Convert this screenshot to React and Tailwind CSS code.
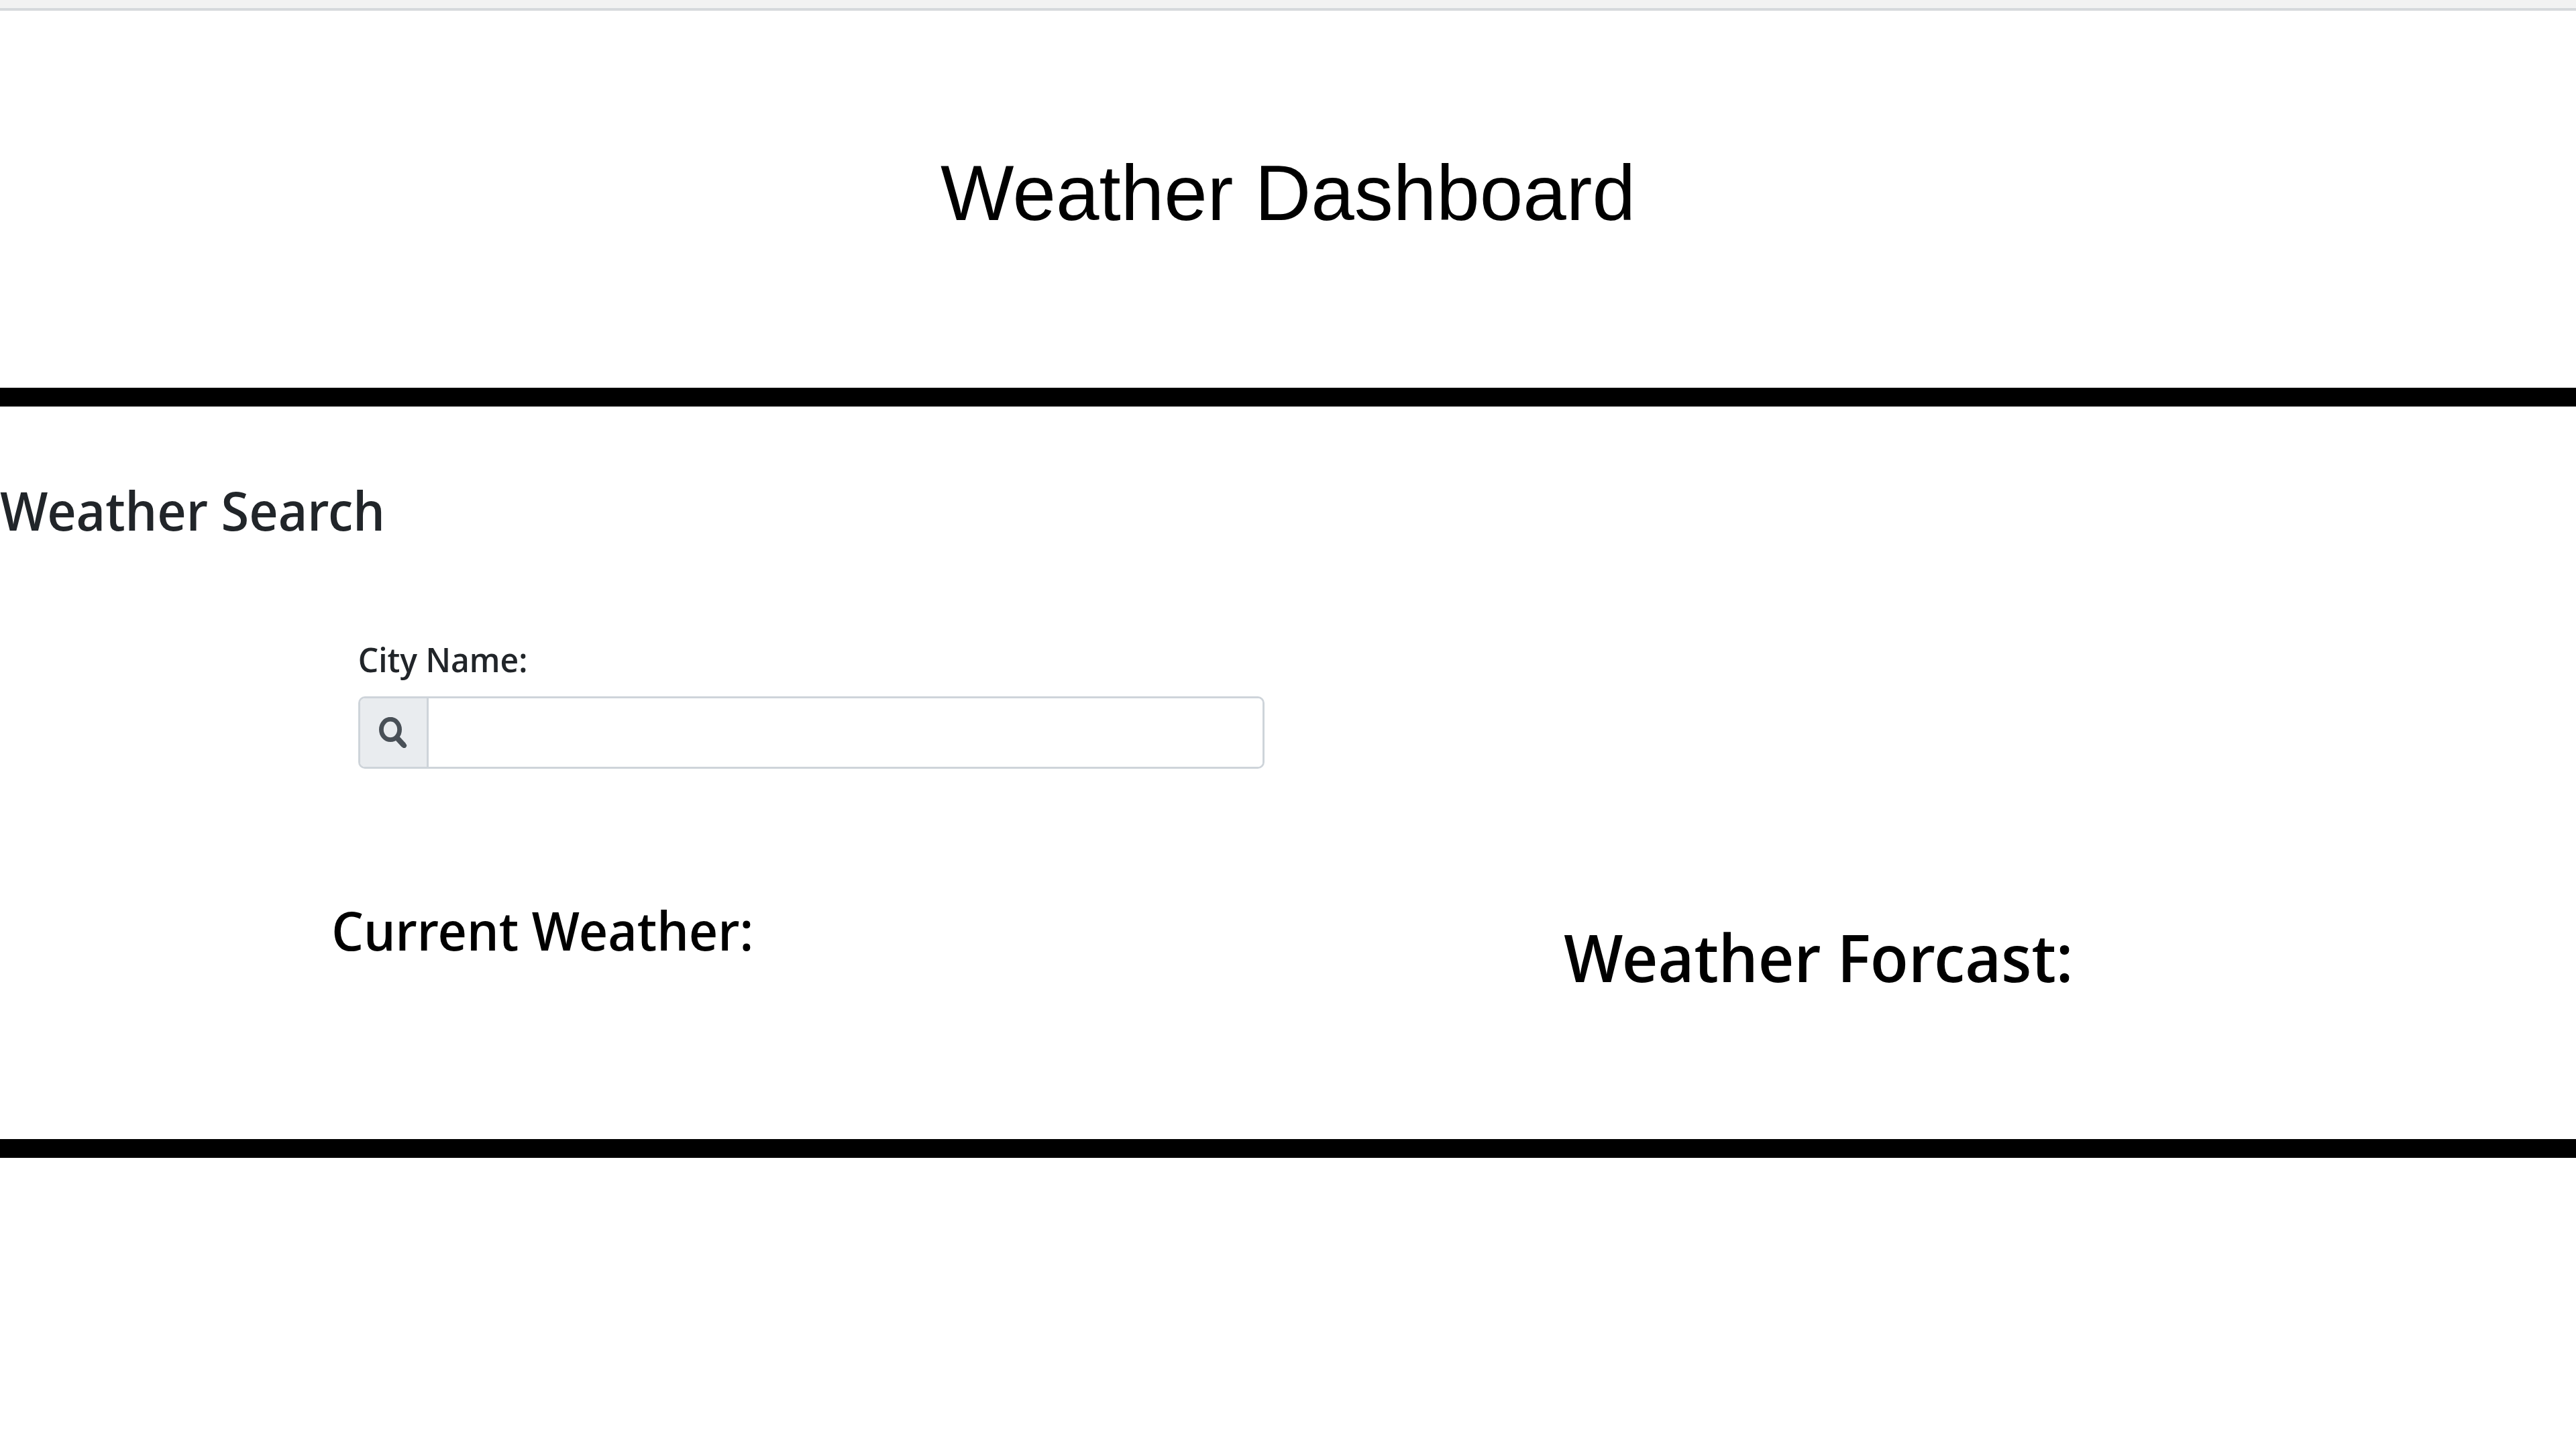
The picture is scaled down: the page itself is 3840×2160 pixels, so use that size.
function SearchIcon() {
  return (
    <svg viewBox="0 0 42 46" className="h-[46px] w-[42px]" fill="none" stroke="currentColor" aria-hidden="true">
      <ellipse cx="17" cy="18.4" rx="13.6" ry="15.2" strokeWidth="6.8" />
      <path d="M26 30 37 42" strokeWidth="8" />
      <path d="M35.8 40.6 37.4 42.4" strokeWidth="7.4" strokeLinecap="round" />
    </svg>
  );
}

export default function App() {
  return (
    <div className="min-h-screen bg-white font-['Noto_Sans_Display','Noto_Sans',sans-serif] font-medium text-black">
      <div className="h-4 border-b-4 border-[#d6d9dc] bg-[#f2f2f2]" />

      <header className="px-4 pt-[200px] pb-[218px] text-center">
        <h1 className="font-['Liberation_Sans',sans-serif] text-[116px] leading-[144px] font-normal">
          Weather Dashboard
        </h1>
      </header>

      <main className="border-y-[28px] border-black pt-[102px] pb-[212px]">
        <h2 className="text-[80px] leading-[104px] text-[#212529]">Weather Search</h2>

        <form className="ml-[13.9%] mt-[134px] w-[35.2%]">
          <label htmlFor="city" className="block text-[51px] leading-[72px] text-[#212529]">
            City Name:
          </label>
          <div className="mt-5 flex h-[108px] overflow-hidden rounded-[10px] border-[3px] border-[#ced4da] bg-white">
            <span className="flex w-[102px] items-center justify-center border-r-[3px] border-[#ced4da] bg-[#e9ecef] text-[#495057]">
              <SearchIcon />
            </span>
            <input id="city" type="text" className="min-w-0 flex-1 bg-white px-6 text-[51px] outline-none" />
          </div>
        </form>

        <div className="mt-[188px] grid grid-cols-[60.7%_39.3%] items-start">
          <h2 className="pl-[21.2%] text-[80px] leading-[104px]">Current Weather:</h2>
          <h2 className="pt-8 text-[99px] leading-[120px]">Weather Forcast:</h2>
        </div>
      </main>
    </div>
  );
}
